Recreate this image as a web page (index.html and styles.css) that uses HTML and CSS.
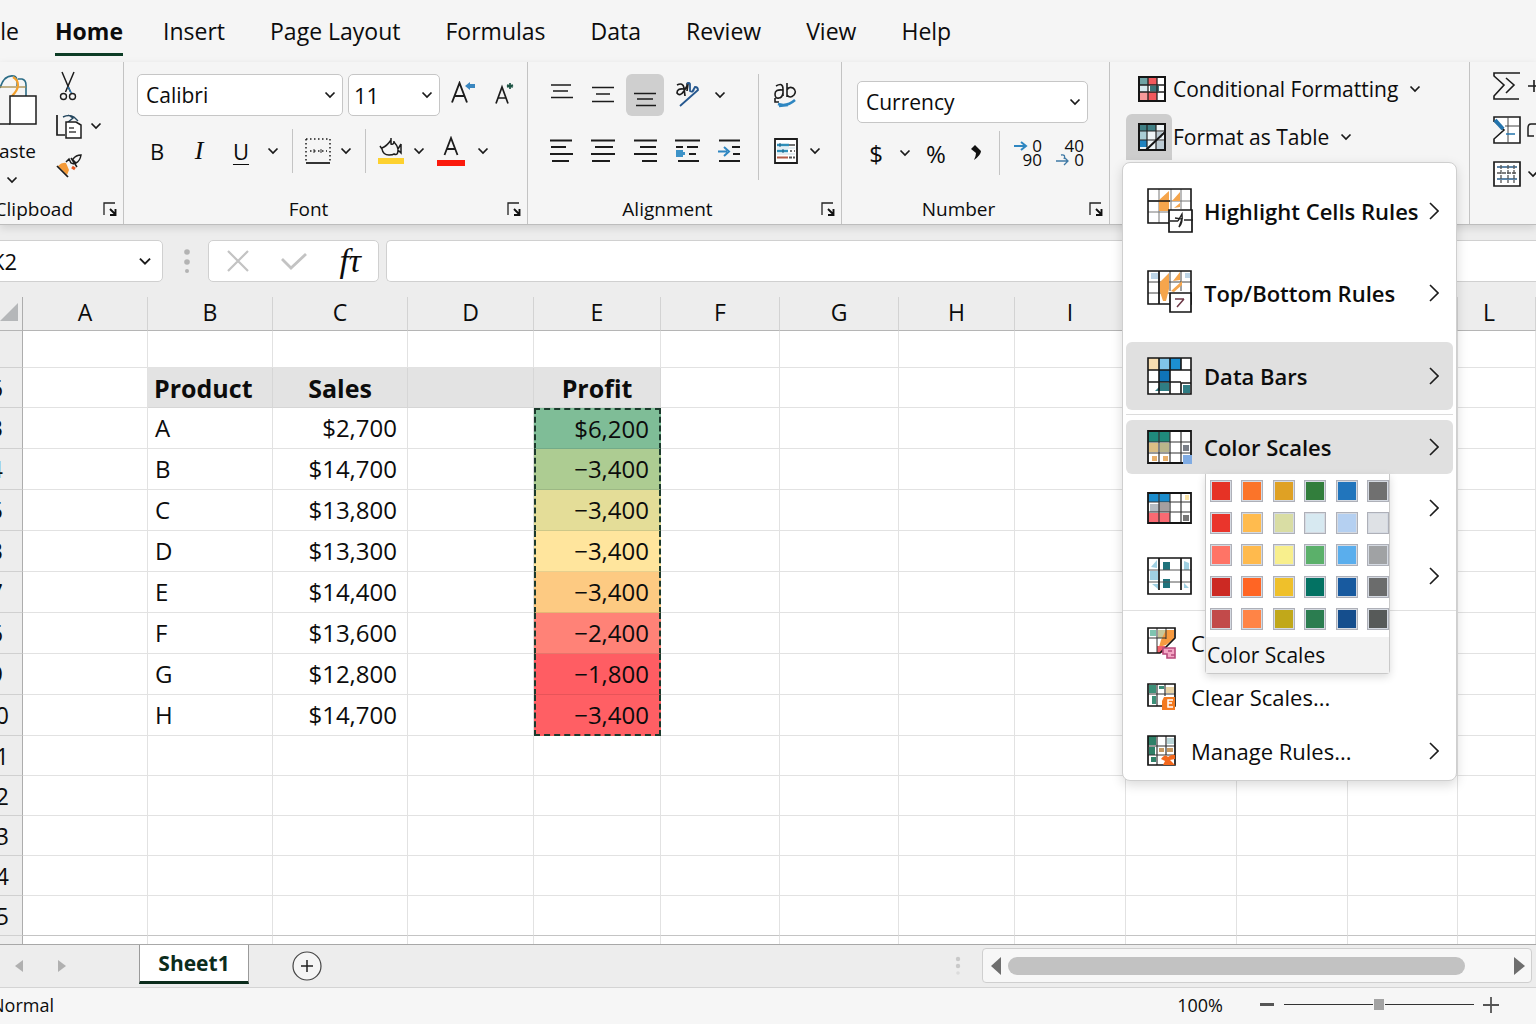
FILE: index.html
```html
<!DOCTYPE html>
<html lang="en">
<head>
<meta charset="utf-8">
<meta name="viewport" content="width=device-width, initial-scale=1">
<title>Sheet1</title>
<link rel="stylesheet" href="styles.css">
</head>
<body>
<svg class="sprite" aria-hidden="true">
  <symbol id="chev" viewBox="0 0 12 8"><path d="M1.500 1.500 6 6l4.500-4.500" fill="none" stroke="#1a1a1a" stroke-width="1.700"/></symbol>
  <symbol id="more" viewBox="0 0 10 18"><path d="M1 1l8 8-8 8" fill="none" stroke="#1c1c1c" stroke-width="1.600"/></symbol>
  <symbol id="launch" viewBox="0 0 14 14"><path d="M1 13V1h11" fill="none" stroke="#222" stroke-width="1.300"/><path d="M7 7l5 5M12.500 7v6H7" fill="none" stroke="#111" stroke-width="1.900"/></symbol>
</svg>
<div class="app">
  <nav class="tabs" aria-label="Ribbon tabs">
    <a class="tab tab-file" href="#file">File</a>
    <a class="tab tab-active" href="#home">Home</a>
    <a class="tab" href="#insert">Insert</a>
    <a class="tab" href="#layout">Page Layout</a>
    <a class="tab" href="#formulas">Formulas</a>
    <a class="tab" href="#data">Data</a>
    <a class="tab" href="#review">Review</a>
    <a class="tab" href="#view">View</a>
    <a class="tab" href="#help">Help</a>
  </nav>

  <div class="ribbon">
    <section class="group clipboard" aria-label="Clipboard">
      <div class="tools clip-tools">
        <button class="paste" type="button">
          <svg width="38" height="52" viewBox="0 0 38 52"><path d="M0 14C3 4 8 1 14 2q4 1 3 10M18 5h4q4 1 4 6v11" fill="none" stroke="#2b6c86" stroke-width="1.600"/><path d="M0 13h26" stroke="#a58a4a" stroke-width="1.300"/><path d="M13 3q5 3 5 8 0 5-6 11" fill="none" stroke="#f2a02c" stroke-width="2.200"/><path d="M0 50h10" stroke="#1c1c1c" stroke-width="1.500"/><path d="M10 22h26v28H10z" fill="#fff" stroke="#1c1c1c" stroke-width="1.500"/></svg>
          <span>Paste</span>
          <svg class="chev" width="12" height="8"><use href="#chev"/></svg>
        </button>
        <div class="clip-col">
          <button class="tool" type="button" aria-label="Cut"><svg width="18" height="32" viewBox="0 0 18 32"><path d="M3 2l8.500 20M15 2L6.500 22" fill="none" stroke="#1c1c1c" stroke-width="1.500"/><path d="M9 17l4 7" stroke="#2b74ae" stroke-width="1.500"/><circle cx="4.500" cy="26.500" r="3" fill="none" stroke="#1c1c1c" stroke-width="1.400"/><circle cx="13.500" cy="26.500" r="3" fill="none" stroke="#1c1c1c" stroke-width="1.400"/></svg></button>
          <button class="tool copy" type="button" aria-label="Copy"><svg width="26" height="26" viewBox="0 0 26 26"><path d="M1 2v20h8" fill="none" stroke="#1c1c1c" stroke-width="1.700"/><path d="M7 4q6-3 11 0l4 4M12 2l5 3-6 5" fill="none" stroke="#24465e" stroke-width="1.400"/><path d="M10 9h10l5 3v13H10z" fill="#fff" stroke="#1c1c1c" stroke-width="1.500"/><path d="M13 15h5M13 19h7" stroke="#444" stroke-width="1.300"/></svg><svg class="chev" width="12" height="8"><use href="#chev"/></svg></button>
          <button class="tool" type="button" aria-label="Format Painter"><svg width="26" height="26" viewBox="0 0 26 26"><path d="M2 13q4-4 8-3l3 7-2 5z" fill="#f49a38"/><path d="M1 13l11 11" stroke="#1c1c1c" stroke-width="1.700"/><path d="M10 9l3-3 2 4 3 1M15 5l4 6 2 3M17 6q3-4 8-4-1 6-5 8l-4-4" fill="none" stroke="#1c1c1c" stroke-width="1.500"/><path d="M16 14l3 2" stroke="#e8561e" stroke-width="3"/></svg></button>
        </div>
      </div>
      <div class="group-foot"><span class="foot-label">Clipboad</span><button class="launch" type="button" aria-label="Clipboard settings"><svg width="14" height="14"><use href="#launch"/></svg></button></div>
    </section>

    <section class="group font" aria-label="Font">
      <div class="tools">
        <div class="row row-a">
          <div class="pick pick-font"><select aria-label="Font name"><option>Calibri</option></select><svg class="chev" width="12" height="8"><use href="#chev"/></svg></div>
          <div class="pick pick-size"><select aria-label="Font size"><option>11</option></select><svg class="chev" width="12" height="8"><use href="#chev"/></svg></div>
          <button class="tool w36" type="button" aria-label="Increase font size"><svg width="26" height="28" viewBox="0 0 26 28"><path d="M2 21.500L9.500 2 17 21.500M5 15h9" fill="none" stroke="#1c1c1c" stroke-width="1.900"/><path d="M15 5l5-4v2h5v4h-5v2z" fill="#3a87c0"/></svg></button>
          <button class="tool w36" type="button" aria-label="Decrease font size"><svg width="20" height="26" viewBox="0 0 20 26"><path d="M2 21.500L8 5l6 16.500M4 16h8" fill="none" stroke="#1c1c1c" stroke-width="1.700"/><path d="M16 1v6M13 3l6 2M19 3l-6 2" stroke="#1d5444" stroke-width="1.700"/></svg></button>
        </div>
        <div class="row row-b">
          <button class="tool w40" type="button">B</button>
          <button class="tool w40 ital" type="button">I</button>
          <button class="tool w40 under" type="button">U</button>
          <button class="tool w20" type="button" aria-label="Underline options"><svg class="chev" width="12" height="8"><use href="#chev"/></svg></button>
          <span class="bar"></span>
          <button class="tool w32" type="button" aria-label="Borders"><svg width="26" height="26" viewBox="0 0 26 26"><path d="M1 1v22M25 1v22M1 1h24M5 13h17" fill="none" stroke="#1c1c1c" stroke-width="1.500" stroke-dasharray="1.500 2.500"/><path d="M9 11v4M16 11v4" stroke="#333"/><path d="M1 25h24" stroke="#111" stroke-width="1.700"/></svg></button>
          <button class="tool w20" type="button" aria-label="Border options"><svg class="chev" width="12" height="8"><use href="#chev"/></svg></button>
          <span class="bar"></span>
          <button class="tool w32" type="button" aria-label="Fill color"><svg width="26" height="28" viewBox="0 0 26 28"><path d="M2 9l2 3q1 6 7 6 4 0 5-1 4 2 4-4l3 3V7M4 11Q9 9 13 3M16 5q3 3 4 7l3-5M13 1v6q3 1 3-3" fill="none" stroke="#1c1c1c" stroke-width="1.500"/><path d="M0 21h26v6H0z" fill="#fdd12f"/></svg></button>
          <button class="tool w20" type="button" aria-label="Fill options"><svg class="chev" width="12" height="8"><use href="#chev"/></svg></button>
          <button class="tool w40" type="button" aria-label="Font color"><svg width="28" height="30" viewBox="0 0 28 30"><path d="M7.500 19L14 2l6.500 17M10 13h8" fill="none" stroke="#1c1c1c" stroke-width="1.800"/><path d="M0 24h28v6H0z" fill="#fb1a0c"/></svg></button>
          <button class="tool w20" type="button" aria-label="Font color options"><svg class="chev" width="12" height="8"><use href="#chev"/></svg></button>
        </div>
      </div>
      <div class="group-foot"><span class="foot-label">Font</span><button class="launch" type="button" aria-label="Font settings"><svg width="14" height="14"><use href="#launch"/></svg></button></div>
    </section>

    <section class="group align" aria-label="Alignment">
      <div class="tools align-tools">
        <div class="align-main">
          <div class="row row-a">
            <button class="tool w38" type="button" aria-label="Top align"><svg width="24" height="24" viewBox="0 0 24 24"><path d="M2 2h20M4 8h15M2 14.500h22" stroke="#1c1c1c" stroke-width="1.600"/></svg></button>
            <button class="tool w38" type="button" aria-label="Middle align"><svg width="24" height="24" viewBox="0 0 24 24"><path d="M1 4.500h22M5 11h14M1 18.500h22" stroke="#1c1c1c" stroke-width="1.600"/></svg></button>
            <button class="tool w38 on" type="button" aria-label="Bottom align"><svg width="24" height="24" viewBox="0 0 24 24"><path d="M1 10.500h22M4 16h16M3 22.500h20" stroke="#1c1c1c" stroke-width="1.600"/></svg></button>
            <button class="tool w38" type="button" aria-label="Orientation"><svg width="24" height="26" viewBox="0 0 24 26"><path d="M2 3q6-3 7 3l1 8M9 7Q2 6 2 11q3 4 7-2l3-5q0-4 1-2l-1 7" fill="none" stroke="#1c1c1c" stroke-width="1.700"/><path d="M5 24L23 8q0-3-3-3l-3 5M12 2q2-2 3 0v7q3 2 4-2" fill="none" stroke="#26588f" stroke-width="1.800"/></svg></button>
            <button class="tool w20" type="button" aria-label="Orientation options"><svg class="chev" width="12" height="8"><use href="#chev"/></svg></button>
          </div>
          <div class="row row-b">
            <button class="tool w38" type="button" aria-label="Align left"><svg width="24" height="26" viewBox="0 0 24 26"><path d="M1 2.500h22M2 9h15M1 16h23M3 23h17" stroke="#1c1c1c" stroke-width="1.900"/></svg></button>
            <button class="tool w38" type="button" aria-label="Center"><svg width="24" height="26" viewBox="0 0 24 26"><path d="M0 2.500h24M4 9h18M0 16h24M1 23h18" stroke="#1c1c1c" stroke-width="1.900"/></svg></button>
            <button class="tool w38" type="button" aria-label="Align right"><svg width="24" height="26" viewBox="0 0 24 26"><path d="M1 2.500h23M7 9h16M1 16h23M9 23h15" stroke="#1c1c1c" stroke-width="1.900"/></svg></button>
            <button class="tool w38" type="button" aria-label="Decrease indent"><svg width="26" height="26" viewBox="0 0 26 26"><path d="M1 2.500h25M2 9h7M13 9h11M15 16h7M4 23h21" stroke="#1c1c1c" stroke-width="1.800"/><path d="M2 12h7v2h2v3H9v2H2z" fill="#3d93c8"/></svg></button>
            <button class="tool w38" type="button" aria-label="Increase indent"><svg width="24" height="26" viewBox="0 0 24 26"><path d="M2 2.500h21M15 9h8M16 16h7M2 23h21" stroke="#1c1c1c" stroke-width="1.800"/><path d="M1 13.500h9M7 9l5 4.500L7 18" fill="none" stroke="#2e86c1" stroke-width="2"/></svg></button>
          </div>
        </div>
        <span class="bar bar-tall"></span>
        <div class="align-side">
          <div class="row row-a"><button class="tool w38" type="button" aria-label="Wrap text"><svg width="24" height="26" viewBox="0 0 24 26"><path d="M2 4q7-4 7 3v7M9 8Q1 7 1 12t4 4q3 0 4-5M13 1v14M13 8q2-4 6-2 4 3 1 7-4 4-7 0M1 16v4h4" fill="none" stroke="#1c1c1c" stroke-width="1.600"/><path d="M4 22q9 3 17-4M5 24l9-1" fill="none" stroke="#2e86c1" stroke-width="2.500"/></svg></button></div>
          <div class="row row-b"><button class="tool w38" type="button" aria-label="Merge cells"><svg width="24" height="26" viewBox="0 0 24 26"><path d="M1 1h22v24H1z" fill="#fff" stroke="#1c1c1c" stroke-width="1.800"/><path d="M3 7h12M3 13h11" stroke="#2f8fb8" stroke-width="2.500"/><path d="M6 5v4M9 11v4" stroke="#1f5f80"/><path d="M15 7h6M16 13h2M20 13h1" stroke="#444" stroke-width="1.500"/><path d="M3 19.500h11" stroke="#b35a45" stroke-width="2"/><path d="M15 19.500h3M19 19.500h2" stroke="#555" stroke-width="2"/><path d="M3 10h18M3 16h18" stroke="#c9dde6"/></svg></button><button class="tool w20" type="button" aria-label="Merge options"><svg class="chev" width="12" height="8"><use href="#chev"/></svg></button></div>
        </div>
      </div>
      <div class="group-foot"><span class="foot-label">Alignment</span><button class="launch" type="button" aria-label="Alignment settings"><svg width="14" height="14"><use href="#launch"/></svg></button></div>
    </section>

    <section class="group number" aria-label="Number">
      <div class="tools number-tools">
        <div class="pick pick-number"><select aria-label="Number format"><option>Currency</option></select><svg class="chev" width="12" height="8"><use href="#chev"/></svg></div>
        <div class="row row-n">
          <button class="tool w38" type="button">$</button>
          <button class="tool w20" type="button" aria-label="Currency options"><svg class="chev" width="12" height="8"><use href="#chev"/></svg></button>
          <button class="tool w38 pct" type="button">%</button>
          <button class="tool w38" type="button" aria-label="Comma style"><svg width="12" height="18" viewBox="0 0 12 18"><path d="M1 5l4-4 6 6q0 4-7 9 2-4 2-7z" fill="#111"/></svg></button>
          <span class="bar"></span>
          <button class="tool dec" type="button" aria-label="Increase decimal"><svg width="14" height="12" viewBox="0 0 14 12"><path d="M0 6h11M7 2l5 4-5 4" fill="none" stroke="#2e86c1" stroke-width="2"/></svg><span>0</span><span class="dec-low">90</span></button>
          <button class="tool dec" type="button" aria-label="Decrease decimal"><span class="dec-low">40</span><svg width="14" height="12" viewBox="0 0 14 12"><path d="M0 7h12M8 3l4 4-4 4M5 1q5-1 3 4" fill="none" stroke="#3f79a5" stroke-width="1.300"/></svg><span>0</span></button>
        </div>
      </div>
      <div class="group-foot"><span class="foot-label">Number</span><button class="launch" type="button" aria-label="Number settings"><svg width="14" height="14"><use href="#launch"/></svg></button></div>
    </section>

    <section class="group styles" aria-label="Styles">
      <button class="style-btn" type="button"><span class="style-icon"><svg width="28" height="26" viewBox="0 0 28 26"><path fill="#fff" d="M1 1h26v24H1z"/><path fill="#6fa3a5" d="M1 1h9v8H1z"/><path fill="#f2595c" d="M10 1h9v8h-9z"/><path fill="#d8eaf0" d="M1 9h9v7H1z"/><path fill="#3b7478" d="M12 10h9v5h-9z"/><path fill="#f79a9a" d="M1 16h9v8H1z"/><path fill="#f2595c" d="M10 16h9v8h-9z"/><path d="M1 9h26M1 16h26M10 1v24M19 1v24" stroke="#222" stroke-width="1.300"/><path d="M1 1h26v24H1z" fill="none" stroke="#151515" stroke-width="2"/></svg></span><span>Conditional Formatting</span><svg class="chev" width="12" height="8"><use href="#chev"/></svg></button>
      <button class="style-btn" type="button" aria-expanded="true"><span class="style-icon style-on"><svg width="28" height="28" viewBox="0 0 28 28"><path fill="#eef4f6" d="M1 1h26v26H1z"/><path fill="#3f7f84" d="M1 1h17v7H1z"/><path fill="#a9cdd4" d="M1 8h8v9H1z"/><path fill="#bccbd3" d="M18 18h9v8h-9zM18 9h6v6h-6z"/><path fill="#2184c0" d="M1 17h8v7H1z"/><path d="M1 8h26M1 17h26M9 1v26M18 1v26" stroke="#222" stroke-width="1.200"/><path d="M1 1h26v26H1zM8 27L27 9" fill="none" stroke="#151515" stroke-width="2"/></svg></span><span>Format as Table</span><svg class="chev" width="12" height="8"><use href="#chev"/></svg></button>

      <div class="menu" role="menu">
        <button class="item item-tall" type="button" role="menuitem"><svg width="48" height="46" viewBox="0 0 48 46"><path fill="#fff" d="M1 1h43v34H1z"/><path d="M1 13h43M12 1v34M24 1v30M34 1v20M1 24h23" fill="none" stroke="#777"/><path d="M12 23V12L22 3v20zM25 13l8-9v9zM27 20l6-5v4z" fill="#f5a54c"/><path d="M1 1h43v34H1zM1 13h22" fill="none" stroke="#151515" stroke-width="1.600"/><path d="M22 22h23v22H22z" fill="#fff" stroke="#151515" stroke-width="1.700"/><path d="M23 33h8M37 32h9M28 30l7 1-3 8q4-4 3-13l-4 7" fill="none" stroke="#222" stroke-width="1.400"/></svg><b>Highlight Cells Rules</b><svg class="more" width="10" height="18"><use href="#more"/></svg></button>
        <button class="item item-tall" type="button" role="menuitem"><svg width="48" height="46" viewBox="0 0 48 46"><path fill="#fff" d="M1 1h43v33H1z"/><path fill="#bcd4e6" d="M4 3h7v6H4zM38 3h5v5h-5z"/><path d="M1 12h43M1 23h21M12 1v33M23 1v20M34 1v20" fill="none" stroke="#444"/><path d="M13 22V12l9-9v16l-3 12h-3zM26 11l7-9v8zM24 21l11-10v4l-8 7z" fill="#f5a54c"/><path d="M1 1h43v33H1zM12 1v33" fill="none" stroke="#151515" stroke-width="1.600"/><path d="M23 23h21v19H23z" fill="#fff" stroke="#151515" stroke-width="1.700"/><path d="M28 29h9M37 29l-7 8" stroke="#6b3644" stroke-width="1.500"/></svg><b>Top/Bottom Rules</b><svg class="more" width="10" height="18"><use href="#more"/></svg></button>
        <button class="item item-mid lit" type="button" role="menuitem"><svg width="48" height="38" viewBox="0 0 48 38"><path fill="#fff" d="M1 1h43v36H1z"/><path fill="#f8deb0" d="M1 1h11v12H1z"/><path fill="#80c4e8" d="M12 1h11v12H12z"/><path fill="#1c8fd2" d="M23 1h11v12H23z"/><path fill="#0f74b8" d="M12 13h11v12H12z"/><path fill="#2f7d84" d="M12 26h10v8H8l4-4zM36 28h7v8h-7z"/><path d="M1 1h43v36H1zM1 13h43M1 25h33M12 1v36M23 1v36M34 1v12M34 37V26h10" fill="none" stroke="#151515" stroke-width="1.600"/></svg><b>Data Bars</b><svg class="more" width="10" height="18"><use href="#more"/></svg></button>
        <hr class="rule">
        <button class="item item-low lit" type="button" role="menuitem"><svg width="48" height="34" viewBox="0 0 48 34"><path fill="#fff" d="M1 1h43v32H1z"/><path fill="#1f8a7c" d="M1 1h22v11H1z"/><path fill="#dcbf85" d="M2 13h9v9H2z"/><path fill="#b9b58b" d="M13 13h9v9h-9z"/><path fill="#e9b06b" d="M5 26h5v5H5zM16 26h5v5h-5z"/><path fill="#7a7f88" d="M36 15h6v6h-6z"/><path d="M1 12h43M1 23h43M12 1v32M23 1v32M34 1v32" stroke="#333" stroke-width="1.200"/><path d="M1 1h43v32H1z" fill="none" stroke="#151515" stroke-width="1.800"/><path fill="#7fabe3" d="M36 25h9v9h-9z"/></svg><b>Color Scales</b><svg class="more" width="10" height="18"><use href="#more"/></svg></button>
        <button class="item item-mid" type="button" role="menuitem" aria-label="Icon Sets"><svg width="48" height="32" viewBox="0 0 48 32"><path fill="#fff" d="M1 1h43v30H1z"/><path fill="#1a8ccc" d="M1 1h22v9H1z"/><path fill="#b5bcc2" d="M3 12h9v8H3z"/><path fill="#a59fa0" d="M12 11h10v9H12z"/><path fill="#fa6a72" d="M1 21h22v10H1z"/><path fill="#777" d="M36 23h6v6h-6z"/><path fill="#fbe3a4" d="M38 3h4v5h-4z"/><path d="M1 10h43M1 20h43M12 1v30M23 1v30M34 1v30" stroke="#333" stroke-width="1.200"/><path d="M1 1h43v30H1z" fill="none" stroke="#151515" stroke-width="1.800"/></svg><svg class="more" width="10" height="18"><use href="#more"/></svg></button>
        <button class="item item-mid" type="button" role="menuitem" aria-label="New Rule"><svg width="48" height="38" viewBox="0 0 48 38"><path fill="#fff" d="M1 1h43v36H1z"/><path fill="#9fd0e2" d="M4 10l6-7v8zM3 14h8v9H3zM5 27h6v5zM37 4l5 2v7h-5zM37 26l5 5h-5z"/><path fill="#1f737c" d="M16 5h7v8h-7zM16 22h7v9h-7z"/><path d="M1 13h43M1 25h43" stroke="#555"/><path d="M1 1h43v36H1zM12 1v32M34 1v32" fill="none" stroke="#151515" stroke-width="1.700"/></svg><svg class="more" width="10" height="18"><use href="#more"/></svg></button>
        <div class="menu-tail">
          <button class="item item-low item-small" type="button" role="menuitem"><svg width="30" height="34" viewBox="0 0 30 34"><path fill="#fff" d="M1 2h27v25H1z"/><path fill="#7fc4b0" d="M3 4h6v6H3z"/><path fill="#c7c79a" d="M11 4h8v8h-8z"/><path fill="#f79a3f" d="M19 4h8v9l-8 6-7 2 2-7z"/><path fill="#f0606a" d="M10 20h8v7h-8z"/><path d="M1 12h18M10 2v25M19 2v11" stroke="#333"/><path d="M1 2h27v10L13 27H1z" fill="none" stroke="#151515" stroke-width="1.700"/><path d="M16 22h12v10h-8v-4h-4zM21 25h4M24 29h4" fill="#f3a6c4" stroke="#b84a7c" stroke-width="1.600"/></svg><span>Clear</span></button>
          <button class="item item-low item-small" type="button" role="menuitem"><svg width="30" height="30" viewBox="0 0 30 30"><path fill="#fff" d="M1 2h27v22H1z"/><path fill="#3c8f78" d="M2 3h7v8H2zM5 14h4v8H5zM12 4h5v3h-5z"/><path fill="#e8d2a4" d="M19 5h8v6h-8z"/><path d="M1 12h27M10 2v22M18 2v12" stroke="#333" stroke-width="1.200"/><path d="M1 2h27v22H1z" fill="none" stroke="#151515" stroke-width="1.700"/><path d="M17 15h11v13H15v-9z" fill="#f47a20"/><path d="M26 18h-5v7h5M21 21h4" fill="none" stroke="#fff" stroke-width="1.500"/></svg><span>Clear Scales...</span></button>
          <button class="item item-low item-small" type="button" role="menuitem"><svg width="30" height="32" viewBox="0 0 30 32"><path fill="#fff" d="M1 1h27v29H1z"/><path fill="#2f8068" d="M1 1h8v9H1zM2 12h6v8H2zM4 22h5v5H4z"/><path fill="#b9d6d8" d="M20 3h7v6h-7z"/><path fill="#c79a63" d="M12 13h5v4h-5zM20 13h6v4h-6z"/><path d="M1 11h27M1 20h27M10 1v29M19 1v19" stroke="#333" stroke-width="1.200"/><path d="M1 1h27v29H1z" fill="none" stroke="#151515" stroke-width="1.700"/><path d="M14 24q4-6 7-2 4-3 7-2v4l-5 1 5 5H16l2-4z" fill="#f4681c"/></svg><span>Manage Rules...</span><svg class="more" width="10" height="18"><use href="#more"/></svg></button>
        </div>

        <div class="palette" role="group" aria-label="Color Scales">
          <div class="swatches">
            <button type="button" style="background:#e63225" aria-label="Red"></button><button type="button" style="background:#fb7429" aria-label="Orange"></button><button type="button" style="background:#dfa124" aria-label="Gold"></button><button type="button" style="background:#327e3c" aria-label="Green"></button><button type="button" style="background:#2175bc" aria-label="Blue"></button><button type="button" style="background:#707070" aria-label="Gray"></button>
            <button type="button" style="background:#ea352c" aria-label="Red 2"></button><button type="button" style="background:#ffbb4e" aria-label="Orange 2"></button><button type="button" style="background:#d9dda4" aria-label="Gold 2"></button><button type="button" style="background:#d7e9f1" aria-label="Green 2"></button><button type="button" style="background:#b5d0f1" aria-label="Blue 2"></button><button type="button" style="background:#dee1e5" aria-label="Gray 2"></button>
            <button type="button" style="background:#ff7466" aria-label="Red 3"></button><button type="button" style="background:#ffba4d" aria-label="Orange 3"></button><button type="button" style="background:#f8ef8d" aria-label="Gold 3"></button><button type="button" style="background:#5bb06a" aria-label="Green 3"></button><button type="button" style="background:#5aaeed" aria-label="Blue 3"></button><button type="button" style="background:#a0a2a4" aria-label="Gray 3"></button>
            <button type="button" style="background:#cc2923" aria-label="Red 4"></button><button type="button" style="background:#ff6524" aria-label="Orange 4"></button><button type="button" style="background:#efc02b" aria-label="Gold 4"></button><button type="button" style="background:#037263" aria-label="Green 4"></button><button type="button" style="background:#185a9f" aria-label="Blue 4"></button><button type="button" style="background:#6b6c6c" aria-label="Gray 4"></button>
            <button type="button" style="background:#c24a4a" aria-label="Red 5"></button><button type="button" style="background:#ff8446" aria-label="Orange 5"></button><button type="button" style="background:#c1a81a" aria-label="Gold 5"></button><button type="button" style="background:#2b7d50" aria-label="Green 5"></button><button type="button" style="background:#154e8d" aria-label="Blue 5"></button><button type="button" style="background:#575a59" aria-label="Gray 5"></button>
          </div>
          <div class="palette-label">Color Scales</div>
        </div>
      </div>
    </section>

    <section class="group editing" aria-label="Editing">
      <button class="edit-btn" type="button" aria-label="AutoSum"><svg width="28" height="30" viewBox="0 0 28 30"><path d="M27 2H1v3l10 9L1 25v3h25M13 7l8 7-8 8" fill="none" stroke="#1c1c1c" stroke-width="1.600"/></svg><svg width="14" height="14" viewBox="0 0 14 14"><path d="M7 1v12M1 7h12" stroke="#1c1c1c" stroke-width="1.600"/></svg></button>
      <button class="edit-btn" type="button" aria-label="Fill"><svg width="28" height="28" viewBox="0 0 28 28"><path d="M1 6V1h26v26H1v-4l10-9L1 5" fill="#fff" stroke="#1c1c1c" stroke-width="1.600"/><path d="M15 1v26M12 10h15" stroke="#444"/><path d="M2 4l8 9" stroke="#2374ad" stroke-width="4"/><path d="M13 18h9" stroke="#2374ad" stroke-width="1.500"/></svg><svg width="14" height="16" viewBox="0 0 14 16"><path d="M12 2H4q-3 0-3 4v8h6" fill="none" stroke="#1c1c1c" stroke-width="1.500"/></svg></button>
      <button class="edit-btn" type="button" aria-label="Clear"><svg width="28" height="26" viewBox="0 0 28 26"><path d="M1 1h26v24H1z" fill="#fff" stroke="#1c1c1c" stroke-width="1.700"/><path d="M4 6h20M4 18h20" stroke="#2b5f8c" stroke-width="1.700"/><path d="M4 12h20M8 4v18M15 4v18M21 4v18" stroke="#555" stroke-width="1.300" stroke-dasharray="4 1"/></svg><svg class="chev" width="12" height="8"><use href="#chev"/></svg></button>
    </section>
  </div>

  <div class="formula-bar">
    <div class="name-box"><input type="text" value="K2" aria-label="Name box"><svg width="14" height="9"><use href="#chev"/></svg></div>
    <svg class="dots" width="8" height="26" viewBox="0 0 8 26"><g fill="#b3b3b3"><circle cx="4" cy="4" r="2.800"/><circle cx="4" cy="14" r="2.800"/><circle cx="4" cy="23" r="2"/></g></svg>
    <div class="fx-box">
      <button type="button" aria-label="Cancel"><svg width="22" height="22" viewBox="0 0 22 22"><path d="M1 1l20 20M21 1L1 21" stroke="#c3c3c3" stroke-width="2.200"/></svg></button>
      <button type="button" aria-label="Enter"><svg width="26" height="18" viewBox="0 0 26 18"><path d="M1 7l9 9L25 2" fill="none" stroke="#c3c3c3" stroke-width="2.800"/></svg></button>
      <button class="fx" type="button">fτ</button>
    </div>
    <input class="formula" type="text" aria-label="Formula">
  </div>

  <table class="grid">
    <colgroup><col class="c-head"><col class="c-b"><col class="c-b"><col class="c-c"><col class="c-d"><col class="c-e"><col class="c-f"><col class="c-f"><col class="c-h"><col class="c-i"><col class="c-i"><col class="c-i"><col class="c-l"><col></colgroup>
    <thead><tr><th class="corner"><svg width="18" height="18" viewBox="0 0 18 18"><path d="M18 0v18H0z" fill="#b5b7b9"/></svg></th><th>A</th><th>B</th><th>C</th><th>D</th><th>E</th><th>F</th><th>G</th><th>H</th><th>I</th><th></th><th></th><th></th><th class="last">L</th></tr></thead>
    <tbody>
      <tr class="first"><th></th><td></td><td></td><td></td><td></td><td></td><td></td><td></td><td></td><td></td><td></td><td></td><td></td><td></td></tr>
      <tr class="titles"><th>6</th><td></td><td class="t">Product</td><td class="t mid">Sales</td><td class="t"></td><td class="t mid">Profit</td><td></td><td></td><td></td><td></td><td></td><td></td><td></td><td></td></tr>
      <tr class="data"><th>3</th><td></td><td>A</td><td class="num">$2,700</td><td></td><td class="scale top" style="background:#7fbd97">$6,200</td><td></td><td></td><td></td><td></td><td></td><td></td><td></td><td></td></tr>
      <tr class="data"><th>4</th><td></td><td>B</td><td class="num">$14,700</td><td></td><td class="scale" style="background:#adcc92">−3,400</td><td></td><td></td><td></td><td></td><td></td><td></td><td></td><td></td></tr>
      <tr class="data"><th>5</th><td></td><td>C</td><td class="num">$13,800</td><td></td><td class="scale" style="background:#e4dd98">−3,400</td><td></td><td></td><td></td><td></td><td></td><td></td><td></td><td></td></tr>
      <tr class="data"><th>3</th><td></td><td>D</td><td class="num">$13,300</td><td></td><td class="scale" style="background:#ffe59d">−3,400</td><td></td><td></td><td></td><td></td><td></td><td></td><td></td><td></td></tr>
      <tr class="data"><th>7</th><td></td><td>E</td><td class="num">$14,400</td><td></td><td class="scale" style="background:#fdca82">−3,400</td><td></td><td></td><td></td><td></td><td></td><td></td><td></td><td></td></tr>
      <tr class="data"><th>6</th><td></td><td>F</td><td class="num">$13,600</td><td></td><td class="scale" style="background:#ff8277">−2,400</td><td></td><td></td><td></td><td></td><td></td><td></td><td></td><td></td></tr>
      <tr class="data"><th>9</th><td></td><td>G</td><td class="num">$12,800</td><td></td><td class="scale" style="background:#ff5d63">−1,800</td><td></td><td></td><td></td><td></td><td></td><td></td><td></td><td></td></tr>
      <tr class="data"><th class="two">10</th><td></td><td>H</td><td class="num">$14,700</td><td></td><td class="scale end" style="background:#ff5f64">−3,400</td><td></td><td></td><td></td><td></td><td></td><td></td><td></td><td></td></tr>
      <tr><th class="two">11</th><td></td><td></td><td></td><td></td><td></td><td></td><td></td><td></td><td></td><td></td><td></td><td></td><td></td></tr>
      <tr><th class="two">12</th><td></td><td></td><td></td><td></td><td></td><td></td><td></td><td></td><td></td><td></td><td></td><td></td><td></td></tr>
      <tr><th class="two">13</th><td></td><td></td><td></td><td></td><td></td><td></td><td></td><td></td><td></td><td></td><td></td><td></td><td></td></tr>
      <tr><th class="two">14</th><td></td><td></td><td></td><td></td><td></td><td></td><td></td><td></td><td></td><td></td><td></td><td></td><td></td></tr>
      <tr class="bottom"><th class="two">15</th><td></td><td></td><td></td><td></td><td></td><td></td><td></td><td></td><td></td><td></td><td></td><td></td><td></td></tr>
      <tr class="stub"><th></th><td></td><td></td><td></td><td></td><td></td><td></td><td></td><td></td><td></td><td></td><td></td><td></td><td></td></tr>
    </tbody>
  </table>

  <div class="sheet-bar">
    <div class="sheet-nav">
      <button type="button" aria-label="Previous sheet"><svg width="8" height="12" viewBox="0 0 8 12"><path d="M8 0v12L0 6z" fill="#b0b0b0"/></svg></button>
      <button type="button" aria-label="Next sheet"><svg width="8" height="12" viewBox="0 0 8 12"><path d="M0 0v12l8-6z" fill="#b0b0b0"/></svg></button>
    </div>
    <button class="sheet-tab" type="button">Sheet1</button>
    <button class="add" type="button" aria-label="New sheet"><svg width="30" height="30" viewBox="0 0 30 30"><circle cx="15" cy="15" r="14" fill="#f5f5f5" stroke="#444" stroke-width="1.200"/><path d="M15 9v12M9 15h12" stroke="#222" stroke-width="1.500"/></svg></button>
    <svg class="split" width="8" height="20" viewBox="0 0 8 20"><g fill="#c9c9c9"><circle cx="4" cy="3" r="2.200"/><circle cx="4" cy="10" r="2.200"/><circle cx="4" cy="17" r="1.800" fill="#dcdcdc"/></g></svg>
    <div class="scroll">
      <button type="button" aria-label="Scroll left"><svg width="10" height="18" viewBox="0 0 10 18"><path d="M10 0v18L0 9z" fill="#6e6e6e"/></svg></button>
      <div class="scroll-thumb"></div>
      <button type="button" aria-label="Scroll right"><svg width="11" height="18" viewBox="0 0 11 18"><path d="M0 0v18l11-9z" fill="#6e6e6e"/></svg></button>
    </div>
  </div>

  <footer class="status">
    <div class="mode"><span>Normal</span></div>
    <span class="zoom-value">100%</span>
    <button type="button" aria-label="Zoom out"><svg width="16" height="16" viewBox="0 0 16 16"><path d="M1 7.500h14" stroke="#555" stroke-width="3"/></svg></button>
    <input class="zoom" type="range" min="0" max="100" value="50" aria-label="Zoom">
    <button type="button" aria-label="Zoom in"><svg width="16" height="16" viewBox="0 0 16 16"><path d="M0 8h16M8 0v16" stroke="#555" stroke-width="1.800"/></svg></button>
  </footer>
</div>
</body>
</html>
```
FILE: styles.css
```css
* { box-sizing: border-box; }
body { margin: 0; background: #f5f5f5; color: #0c0c0c; font-family: "Open Sans", "Noto Sans", sans-serif; font-size: 22px; }
button, input, select { font: inherit; color: inherit; }
button { border: 0; padding: 0; background: none; display: inline-flex; align-items: center; justify-content: center; }
svg { display: block; flex: none; }
.sprite { width: 0; height: 0; position: absolute; }
.app { min-height: 100vh; display: flex; flex-direction: column; overflow: hidden; }

/* Ribbon tabs */
.tabs { display: flex; height: 62px; padding-top: 6px; }
.tab { height: 50px; line-height: 50px; margin-right: 45px; font-size: 23px; color: inherit; text-decoration: none; white-space: nowrap; }
.tab-file { width: 19px; margin-right: 36px; display: flex; justify-content: flex-end; }
.tab-active { margin-right: 40px; border-bottom: 3px solid #0d3d26; font-weight: 700; }

/* Ribbon */
.ribbon { display: flex; height: 163px; border-bottom: 1px solid #bdbdbd; box-shadow: 0 3px 8px #0000001f; position: relative; z-index: 2; background: #f5f5f5; }
.group { display: flex; flex-direction: column; flex: none; border-right: 1px solid #c3c3c3; }
.tools { flex: 1; padding-top: 12px; }
.row { display: flex; align-items: center; height: 42px; }
.row-b { margin-top: 14px; }
.group-foot { display: flex; align-items: center; height: 28px; padding-right: 6px; margin-bottom: 1px; font-size: 19px; }
.foot-label { flex: 1; padding-right: 14px; text-align: center; }
.tool { height: 42px; flex: none; }
.w20 { width: 20px; }
.w32 { width: 32px; }
.w36 { width: 36px; }
.w38 { width: 38px; }
.w40 { width: 40px; }
.bar { width: 1px; height: 44px; background: #c4c4c4; flex: none; margin: 0 7px; }
.bar-tall { height: 106px; }
.on { background: #cfcfcf; border-radius: 6px; }
.pick { display: grid; align-items: center; height: 42px; flex: none; font-size: 21px; }
.pick select, .pick svg { grid-area: 1 / 1; }
.pick select { appearance: none; width: 100%; height: 42px; padding: 0 8px; background: #fff; border: 1px solid #c6c6c6; border-radius: 5px; }
.pick svg { justify-self: end; margin-right: 7px; pointer-events: none; }
.pick-size select { padding-left: 5px; font-size: 22px; }

.clipboard { width: 124px; }
.clip-tools { display: flex; padding-top: 8px; }
.paste { width: 38px; flex-direction: column; justify-content: flex-start; align-items: flex-end; padding-top: 4px; font-size: 19px; gap: 12px; }
.paste span { line-height: 26px; margin-right: 2px; }
.paste .chev { margin-right: 20px; }
.clip-col { margin-left: 18px; }
.clip-col .tool { height: 40px; display: flex; gap: 8px; }
.clip-col .tool:first-child { height: 32px; margin: 0 0 4px 3px; }
.clipboard .foot-label { display: flex; justify-content: flex-end; width: 73px; flex: none; padding: 0; margin-right: 30px; }

.font { width: 404px; padding-left: 13px; }
.font .row-a { gap: 5px; }
.font .row-b { gap: 2px; }
.font .group-foot { margin-left: -13px; }
.pick-font { width: 206px; }
.pick-size { width: 92px; }
.ital { font-family: "Liberation Serif", serif; font-style: italic; font-size: 26px; }
.under { text-decoration: underline; text-decoration-thickness: 1px; text-underline-offset: 4px; }

.align { width: 314px; }
.align-tools { display: flex; padding-left: 14px; }
.align-main .row { gap: 4px; }
.align-main { width: 208px; }
.bar-tall { margin: 0 8px; }

.number { width: 268px; }
.number-tools { padding: 19px 16px 0 15px; }
.pick-number { width: 231px; }
.row-n { margin-top: 9px; font-size: 24px; }
.pct { margin: 0 2px; }
.number .bar { margin: 0 8px 0 4px; }
.dec { display: grid; grid-template-columns: 18px 14px; line-height: 14px; font-size: 17px; width: 36px; align-items: center; align-content: center; justify-items: end; margin-right: 6px; }
.dec-low { grid-column: 1 / 3; }

.styles { width: 360px; position: relative; padding: 4px 0 0 16px; align-items: flex-start; }
.style-btn { height: 48px; font-size: 21px; line-height: 26px; padding-bottom: 2px; white-space: nowrap; }
.style-icon { width: 46px; height: 46px; padding-left: 6px; margin-right: 1px; display: flex; align-items: center; justify-content: center; }
.style-on { background: #cdcdcd; border-radius: 6px 6px 0 0; }
.style-btn .chev { margin-left: 11px; }

.editing { flex: 1; border: 0; padding: 2px 0 0 23px; overflow: hidden; min-width: 0; align-items: flex-start; }
.edit-btn { height: 44px; gap: 6px; }

/* Conditional formatting menu */
.menu { position: absolute; left: 12px; top: 100px; width: 335px; padding: 7px 3px 2px; background: #fff; border: 1px solid #cfcfcf; border-radius: 8px; box-shadow: 0 4px 12px #00000026; z-index: 5; display: flex; flex-direction: column; }
.item { display: flex; justify-content: flex-start; gap: 9px; padding: 0 14px 0 21px; border-radius: 6px; white-space: nowrap; }
.item b { font-weight: 600; }
.item .more { margin-left: auto; }
.item-tall { height: 82px; }
.item-mid { height: 68px; }
.item-low { height: 54px; }
.item-small { gap: 14px; }
.lit { background: #e0e0e0; }
.item-tall + .lit { margin-top: 8px; }
.rule { width: 100%; height: 1px; border: 0; background: #dcdcdc; margin: 4px 0 5px; }
.menu-tail { border-top: 1px solid #e0e0e0; padding-top: 5px; margin: 0 -3px; display: flex; flex-direction: column; }
.menu-tail .item { padding: 0 17px 0 24px; }
.palette { position: absolute; left: 82px; top: 311px; width: 185px; font-size: 21px; background: #fff; border: 1px solid #c9c9c9; border-top: 0; border-radius: 0 0 4px 4px; box-shadow: 0 3px 8px #00000024; }
.swatches { display: grid; grid-template-columns: repeat(6, 22px); justify-content: space-between; row-gap: 10px; padding: 6px 0 7px 4px; }
.swatches button { height: 22px; border: 1px solid #aeb0b8; box-shadow: inset 0 0 0 1px #d5dae2; }
.palette-label { height: 36px; line-height: 36px; padding-left: 1px; background: #f2f2f2; }

/* Formula bar */
.formula-bar { display: flex; align-items: center; height: 72px; background: #ededed; }
.name-box { width: 183px; height: 42px; margin-left: -20px; display: flex; align-items: center; background: #fff; border: 1px solid #d0d0d0; border-radius: 5px; padding-right: 10px; }
.name-box input { flex: 1; min-width: 0; border: 0; background: none; padding: 0 0 0 10px; }
.dots { margin: 0 17px 0 20px; }
.fx-box { display: flex; align-items: center; justify-content: space-between; width: 171px; height: 42px; padding: 0 17px 0 18px; background: #fff; border: 1px solid #d0d0d0; border-radius: 5px; }
.fx { font-family: "Liberation Serif", serif; font-style: italic; font-size: 34px; line-height: 36px; }
.formula { flex: 1; min-width: 0; height: 42px; margin-left: 7px; background: #fff; border: 1px solid #d0d0d0; border-right: 0; border-radius: 5px 0 0 5px; }

/* Cells */
.grid { table-layout: fixed; width: 100%; border-collapse: separate; border-spacing: 0; background: #fff; font-size: 24px; line-height: 30px; }
.c-head { width: 23px; }
.c-b { width: 125px; }
.c-c { width: 135px; }
.c-d { width: 126px; }
.c-e { width: 127px; }
.c-f { width: 119px; }
.c-h { width: 116px; }
.c-i { width: 111px; }
.c-l { width: 110px; }
.grid th { background: #ededed; font-weight: 400; font-size: 23px; padding: 0; }
.grid thead th { height: 34px; padding-bottom: 3px; border-right: 1px solid #d3d3d3; border-bottom: 1px solid #b5b5b5; }
.grid .corner { border-right: 1px solid #adadad; }
.grid .last { text-align: left; padding-left: 25px; }
.grid tbody th { border-right: 1px solid #adadad; border-bottom: 1px solid #d0d0d0; direction: rtl; padding-right: 20px; white-space: nowrap; overflow: hidden; }
.grid tbody .two { padding-right: 14px; }
.grid td { height: 40px; padding: 0 0 0 7px; border-right: 1px solid #e2e2e2; border-bottom: 1px solid #e2e2e2; white-space: nowrap; }
.grid .first td { height: 37px; }
.grid .data td { height: 41px; }
.grid .stub td { height: 8px; border-bottom: 0; }
.grid .stub th { border-bottom: 0; }
.grid .bottom td { border-bottom-color: #c4c4c4; }
.grid .t { background: #e3e3e3; font-weight: 700; font-size: 25px; border-color: #d6d6d6; padding-left: 6px; }
.grid .mid { text-align: center; padding: 0; }
.grid .num { text-align: right; padding-right: 10px; }
.grid .scale { text-align: right; padding-right: 10px; border-left: 2px dashed #1b3a2c; border-right: 2px dashed #1b3a2c; border-bottom-color: #00000018; }
.grid .top { border-top: 2px dashed #1b3a2c; }
.grid .end { border-bottom: 2px dashed #1b3a2c; }

/* Sheet tabs */
.sheet-bar { display: flex; align-items: center; height: 44px; padding-bottom: 1px; background: #ededed; border-top: 1px solid #a8a8a8; border-bottom: 1px solid #d4d4d4; }
.sheet-nav { display: flex; width: 139px; gap: 35px; padding-left: 15px; }
.sheet-tab { width: 110px; height: 39px; align-self: flex-start; background: #fff; border: 1px solid #9a9a9a; border-top: 0; border-bottom: 3px solid #0b2c1c; font-weight: 700; font-size: 21px; color: #0b2c1c; }
.add { margin-left: 43px; margin-right: auto; }
.split { margin-right: 20px; }
.scroll { width: 550px; height: 35px; margin-right: 4px; padding: 0 6px 0 8px; display: flex; align-items: center; background: #f7f7f7; border: 1px solid #cfcfcf; border-radius: 4px; }
.scroll-thumb { width: 457px; height: 18px; margin: 0 auto 0 7px; background: #c2c2c2; border-radius: 9px; }

/* Status bar */
.status { display: flex; align-items: center; flex: 1; min-height: 36px; padding: 0 37px 3px 0; font-size: 18px; background: #f6f6f6; }
.mode { width: 54px; margin-right: auto; display: flex; justify-content: flex-end; }
.zoom-value { margin-right: 36px; }
.zoom { appearance: none; width: 190px; height: 16px; margin: 0 9px; background: linear-gradient(#333, #333) center / 100% 1px no-repeat; }
.zoom::-webkit-slider-thumb { appearance: none; width: 12px; height: 13px; background: #a3a3a3; border: 1px solid #f6f6f6; }
```
